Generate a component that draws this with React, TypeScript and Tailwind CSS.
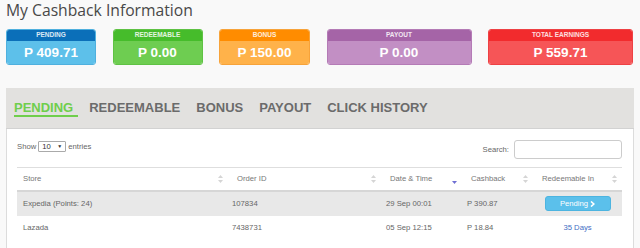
import React from "react";

const cards = [
  { label: "PENDING", value: "P 409.71", w: "w-[90px]", head: "bg-[#0b6fb9]", body: "bg-[#5dc0ea]", border: "border-[#4fb0de]" },
  { label: "REDEEMABLE", value: "P 0.00", w: "w-[90px]", head: "bg-[#46bc2b]", body: "bg-[#6ecd51]", border: "border-[#5fc244]" },
  { label: "BONUS", value: "P 150.00", w: "w-[91px]", head: "bg-[#ff8c00]", body: "bg-[#ffb24a]", border: "border-[#f7a33a]" },
  { label: "PAYOUT", value: "P 0.00", w: "w-[145px]", head: "bg-[#a564a7]", body: "bg-[#c28fc4]", border: "border-[#b47bb6]" },
  { label: "TOTAL EARNINGS", value: "P 559.71", w: "w-[145px]", head: "bg-[#f22b2d]", body: "bg-[#f65557]", border: "border-[#ee4144]" },
];

const tabs = ["PENDING", "REDEEMABLE", "BONUS", "PAYOUT", "CLICK HISTORY"];

const SortBoth = () => (
  <svg width="5" height="8" viewBox="0 0 5 8">
    <path d="M2.5 0 L5 3 L0 3 Z" fill="#d5d5d5" />
    <path d="M0 5 L5 5 L2.5 8 Z" fill="#d5d5d5" />
  </svg>
);

const SortDesc = () => (
  <svg width="5" height="8" viewBox="0 0 5 8" className="mt-[4px]">
    <path d="M0 4 L5 4 L2.5 7 Z" fill="#6f6fd3" />
  </svg>
);

const columns = [
  { title: "Store", pl: "pl-[6px]", icon: <SortBoth /> },
  { title: "Order ID", pl: "pl-[9px]", icon: <SortBoth /> },
  { title: "Date & Time", pl: "pl-[9px]", icon: <SortDesc /> },
  { title: "Cashback", pl: "pl-[9px]", icon: <SortBoth /> },
  { title: "Redeemable In", pl: "pl-[9px]", icon: <SortBoth /> },
];

export default function App() {
  return (
    <div className="w-[640px] h-[248px] overflow-hidden bg-[#f9f9f9] px-[6px] font-['Liberation_Sans',Arial,sans-serif]">
      <h1 className="font-['Open_Sans',sans-serif] text-[15.7px] leading-[20px] text-[#484848] font-normal">
        My Cashback Information
      </h1>

      <div className="mt-[9px] flex gap-[16.5px]">
        {cards.map((c) => (
          <div key={c.label} className={`${c.w} h-[36px] rounded-[3px] overflow-hidden border ${c.border} flex flex-col`}>
            <div className={`${c.head} h-[11px] flex items-center justify-center text-[6.5px] font-bold text-white/85 leading-none`}>
              {c.label}
            </div>
            <div className={`${c.body} flex-1 flex items-center justify-center text-[13.5px] font-bold text-white leading-none`}>
              {c.value}
            </div>
          </div>
        ))}
      </div>

      <div className="mt-[23px] w-[628px]">
        <div className="h-[41px] bg-[#e2e1df] border-b border-[#d2d2d2] pt-[13px] pl-[8px] flex gap-[11px]">
          {tabs.map((t, i) => (
            <div
              key={t}
              className={`h-[16px] pr-[5px] text-[13px] leading-[14px] font-bold ${
                i === 0 ? "text-[#6fce4c] border-b-2 border-[#6fce4c]" : "text-[#6b6b6b]"
              }`}
            >
              {t}
            </div>
          ))}
        </div>

        <div className="bg-white border-l border-r border-[#dcdcdc] pl-[10px] pr-[11px] pt-[11px] h-[140px]">
          <div className="flex items-center justify-between h-[19px] text-[7.7px] text-[#666]">
            <div className="flex items-center gap-[2px] -mt-[6px]">
              <span>Show</span>
              <div className="w-[28px] h-[11px] border border-[#aaa] rounded-[1px] flex items-center justify-between px-[3px] text-[#333]">
                <span>10</span>
                <span className="text-[5px]">▼</span>
              </div>
              <span>entries</span>
            </div>
            <div className="flex items-center gap-[5px]">
              <span>Search:</span>
              <div className="w-[108px] h-[19px] border border-[#ccc] rounded-[3px] bg-white" />
            </div>
          </div>

          <table className="mt-[8px] w-[605px] table-fixed border-collapse text-[7.7px]">
            <colgroup>
              <col className="w-[211px]" />
              <col className="w-[153px]" />
              <col className="w-[81px]" />
              <col className="w-[71px]" />
              <col className="w-[89px]" />
            </colgroup>
            <thead>
              <tr className="border-t border-[#dedede] border-b-2 border-b-[#d6d6d6] h-[23px]">
                {columns.map((c) => (
                  <th key={c.title} className={`${c.pl} pr-[5px] font-normal text-[#777] text-left`}>
                    <div className="flex items-center justify-between">
                      <span>{c.title}</span>
                      {c.icon}
                    </div>
                  </th>
                ))}
              </tr>
            </thead>
            <tbody className="text-[#666]">
              <tr className="bg-[#e8e8e8] h-[25px]">
                <td className="pl-[6px]">Expedia (Points: 24)</td>
                <td className="pl-[4px]">107834</td>
                <td className="pl-[5px]">29 Sep 00:01</td>
                <td className="pl-[5px]">P 390.87</td>
                <td className="text-center">
                  <span className="inline-flex items-center justify-center gap-[2px] w-[66px] h-[15px] rounded-[3px] bg-[#5bc0eb] border border-[#4cb4e0] text-white">
                    Pending
                    <svg width="5" height="6" viewBox="0 0 5 6">
                      <path d="M1 0.5 L3.8 3 L1 5.5" fill="none" stroke="#fff" strokeWidth="1.6" />
                    </svg>
                  </span>
                </td>
              </tr>
              <tr className="h-[25px]">
                <td className="pl-[6px]">Lazada</td>
                <td className="pl-[4px]">7438731</td>
                <td className="pl-[5px]">05 Sep 12:15</td>
                <td className="pl-[5px]">P 18.84</td>
                <td className="text-center">
                  <span className="text-[#3e6ec4]">35 Days</span>
                </td>
              </tr>
            </tbody>
          </table>
        </div>
      </div>
    </div>
  );
}
